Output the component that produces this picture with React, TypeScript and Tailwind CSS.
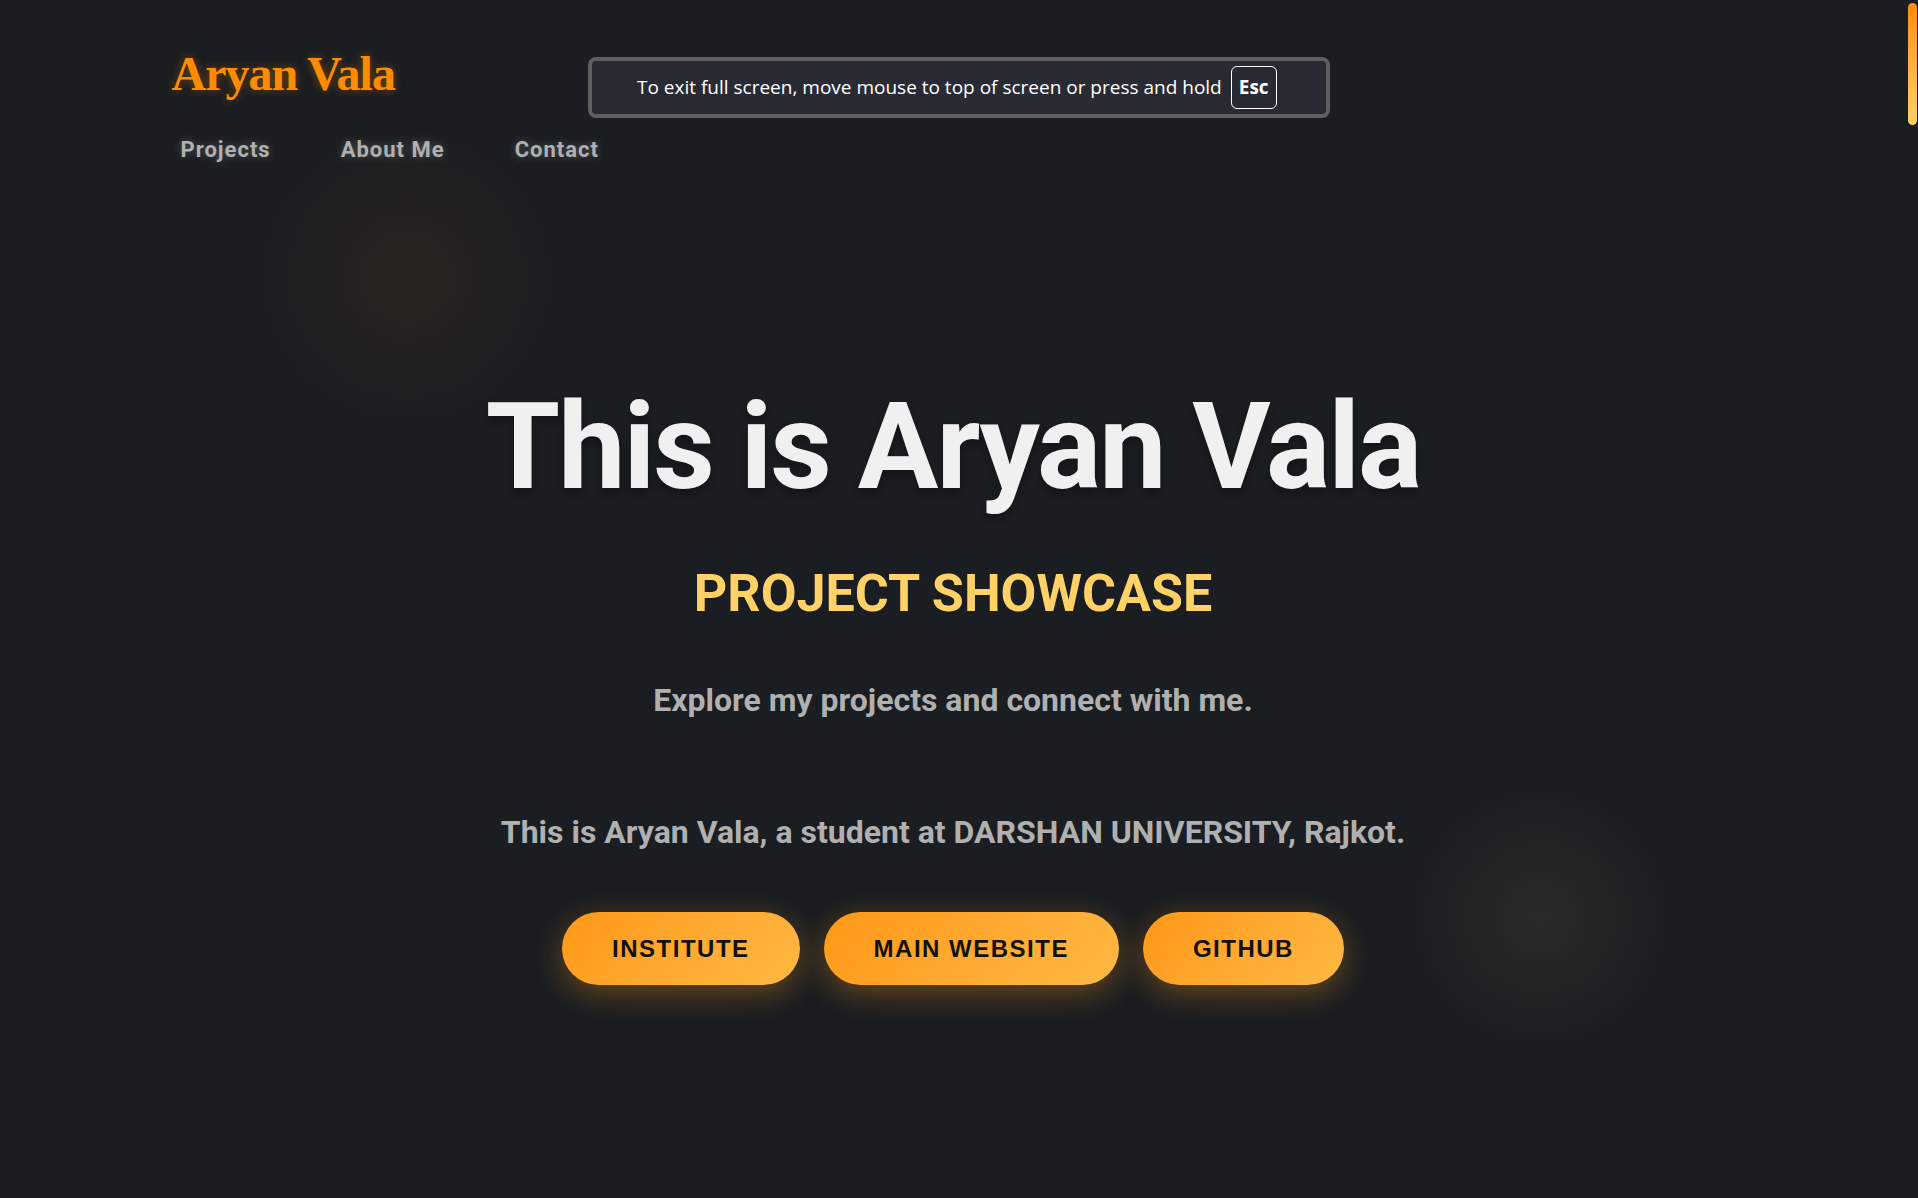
const navLinks = [
  { label: "Projects", href: "#projects" },
  { label: "About Me", href: "#about" },
  { label: "Contact", href: "#contact" },
];

const actions = ["Institute", "Main Website", "GitHub"];

function Glows() {
  return (
    <div aria-hidden="true" className="pointer-events-none absolute inset-0 overflow-hidden">
      <div className="absolute top-[117px] left-[247px] size-80 rounded-full bg-[radial-gradient(closest-side,rgba(255,140,0,0.07),rgba(255,140,0,0))]" />
      <div className="absolute right-[228px] bottom-[143px] size-[276px] rounded-full bg-[radial-gradient(closest-side,rgba(255,209,102,0.08),rgba(255,209,102,0))]" />
    </div>
  );
}

function Header() {
  return (
    <header className="relative px-[9%] pt-[46px]">
      <a
        href="#home"
        className="font-['Liberation_Serif',serif] text-[48px] leading-[56px] font-bold tracking-[-1px] text-[#ff8c00] [text-shadow:0_0_10px_rgba(255,140,0,0.4)]"
      >
        Aryan Vala
      </a>
      <nav className="mt-8 flex gap-[70px] px-[9px]">
        {navLinks.map((link) => (
          <a
            key={link.href}
            href={link.href}
            className="text-[22px] leading-8 font-bold tracking-[1px] text-[#b0b0b0] [text-shadow:0_0_8px_rgba(255,255,255,0.25)]"
          >
            {link.label}
          </a>
        ))}
      </nav>
    </header>
  );
}

function Hero() {
  return (
    <main className="relative flex flex-col items-center pt-[209px] text-center font-bold">
      <h1 className="text-[120px] leading-[144px] tracking-[-2px] text-[#f0f0f0] [text-shadow:0_4px_8px_rgba(0,0,0,0.3)]">
        This is Aryan Vala
      </h1>
      <h2 className="mt-[39px] text-[52px] leading-[72px] text-[#ffd166] uppercase">Project Showcase</h2>
      <p className="mt-[46px] text-[32px] leading-[48px] text-[#b0b0b0]">Explore my projects and connect with me.</p>
      <p className="mt-[84px] text-[32px] leading-[48px] text-[#b0b0b0]">
        This is Aryan Vala, a student at DARSHAN UNIVERSITY, Rajkot.
      </p>
      <div className="mt-14 flex flex-wrap justify-center gap-6">
        {actions.map((label) => (
          <button
            key={label}
            type="button"
            className="h-[73px] rounded-full bg-linear-135 from-[#ff9814] to-[#ffb943] px-[50px] font-['Liberation_Sans',Arial,sans-serif] text-[24px] font-bold tracking-[1.5px] text-[#121212] uppercase shadow-[0_8px_30px_rgba(255,152,20,0.35)]"
          >
            {label}
          </button>
        ))}
      </div>
    </main>
  );
}

function FullScreenNotice() {
  return (
    <div
      role="status"
      className="fixed top-[57px] left-1/2 flex h-[61px] w-[742px] -translate-x-1/2 items-center rounded-lg border-4 border-[#5f5f5f] bg-[#292b34] pl-[45px] font-['Open_Sans','Noto_Sans',sans-serif] text-[19px] text-white"
    >
      <span className="whitespace-nowrap">To exit full screen, move mouse to top of screen or press and hold</span>
      <kbd className="ml-[9px] rounded-md border border-white px-[7px] py-[6px] font-['Open_Sans','Noto_Sans',sans-serif] leading-[29px] font-bold">
        Esc
      </kbd>
    </div>
  );
}

export default function App() {
  return (
    <div className="flex min-h-screen bg-[#1a1d21] font-[Roboto,sans-serif]">
      <div className="relative min-w-0 flex-1">
        <Glows />
        <Header />
        <Hero />
      </div>
      <div aria-hidden="true" className="w-3 pt-[3px] pl-[2px]">
        <div className="h-[122px] w-[9px] rounded-full bg-linear-to-b from-[#ff8c00] to-[#ffd166]" />
      </div>
      <FullScreenNotice />
    </div>
  );
}
